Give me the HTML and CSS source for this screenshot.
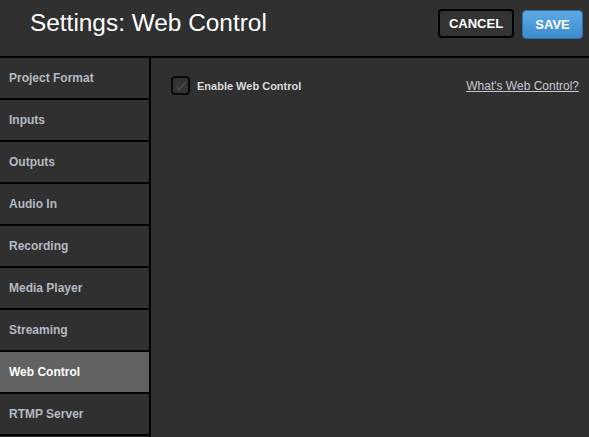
FILE: index.html
```html
<!DOCTYPE html>
<html>
<head>
<meta charset="utf-8">
<link rel="stylesheet" href="styles.css">
</head>
<body>
<div class="header">
  <h1 class="title">Settings: Web Control</h1>
  <div class="actions">
    <button class="btn btn-cancel">CANCEL</button>
    <button class="btn btn-save">SAVE</button>
  </div>
</div>
<div class="main">
  <ul class="sidebar">
    <li class="item">Project Format</li>
    <li class="item">Inputs</li>
    <li class="item">Outputs</li>
    <li class="item">Audio In</li>
    <li class="item">Recording</li>
    <li class="item">Media Player</li>
    <li class="item">Streaming</li>
    <li class="item active">Web Control</li>
    <li class="item">RTMP Server</li>
  </ul>
  <div class="content">
    <div class="row">
      <label class="check">
        <span class="box">
          <svg width="14" height="14" viewBox="0 0 14 14"><path d="M2.5 7.5 L5.5 10.5 L11.5 3.5" fill="none" stroke="#474747" stroke-width="2.2"/></svg>
        </span>
        <span class="label">Enable Web Control</span>
      </label>
      <a class="link" href="#">What's Web Control?</a>
    </div>
  </div>
</div>
</body>
</html>
```
FILE: styles.css
```css
html, body {
  margin: 0;
  padding: 0;
  background: #303030;
  font-family: "Liberation Sans", Arial, sans-serif;
  height: 100%;
  overflow: hidden;
}
.header {
  height: 56px;
  border-bottom: 2px solid #000;
  display: flex;
  align-items: flex-start;
  justify-content: space-between;
  box-sizing: content-box;
}
.title {
  margin: 8px 0 0 30px;
  font-size: 24.4px;
  font-weight: normal;
  color: #fff;
  line-height: 29px;
}
.actions {
  display: flex;
  gap: 8px;
  margin: 9px 6px 0 0;
}
.btn {
  font-family: "Liberation Sans", Arial, sans-serif;
  font-weight: bold;
  font-size: 13px;
  color: #fff;
  height: 29px;
  border-radius: 4px;
  padding: 0;
  cursor: pointer;
}
.btn-cancel {
  width: 76px;
  background: #333;
  border: 2px solid #000;
}
.btn-save {
  width: 61px;
  background: linear-gradient(#5eaae4, #3d8ace);
  border: 1px solid #2b6ea8;
  margin-top: 1px;
}
.main {
  display: flex;
  height: 379px;
}
.sidebar {
  list-style: none;
  margin: 0;
  padding: 0;
  width: 149px;
  border-right: 2px solid #000;
  flex-shrink: 0;
}
.item {
  height: 40px;
  border-bottom: 2px solid #000;
  padding-left: 9px;
  display: flex;
  align-items: center;
  font-size: 12px;
  font-weight: bold;
  color: #b3bac2;
  background: #303030;
}
.item.active {
  background: #626262;
  color: #fff;
}
.content {
  flex: 1;
  padding: 18px 10px 0 20px;
}
.row {
  display: flex;
  justify-content: space-between;
  align-items: center;
}
.check {
  display: flex;
  align-items: center;
  gap: 7px;
}
.box {
  width: 15px;
  height: 15px;
  border: 2px solid #0a0a0a;
  border-radius: 4px;
  background: #333;
  display: flex;
  align-items: center;
  justify-content: center;
}
.label {
  font-size: 11px;
  font-weight: bold;
  color: #dcdcdc;
}
.link {
  font-size: 12px;
  color: #c4cad2;
  text-decoration: underline;
}
```
